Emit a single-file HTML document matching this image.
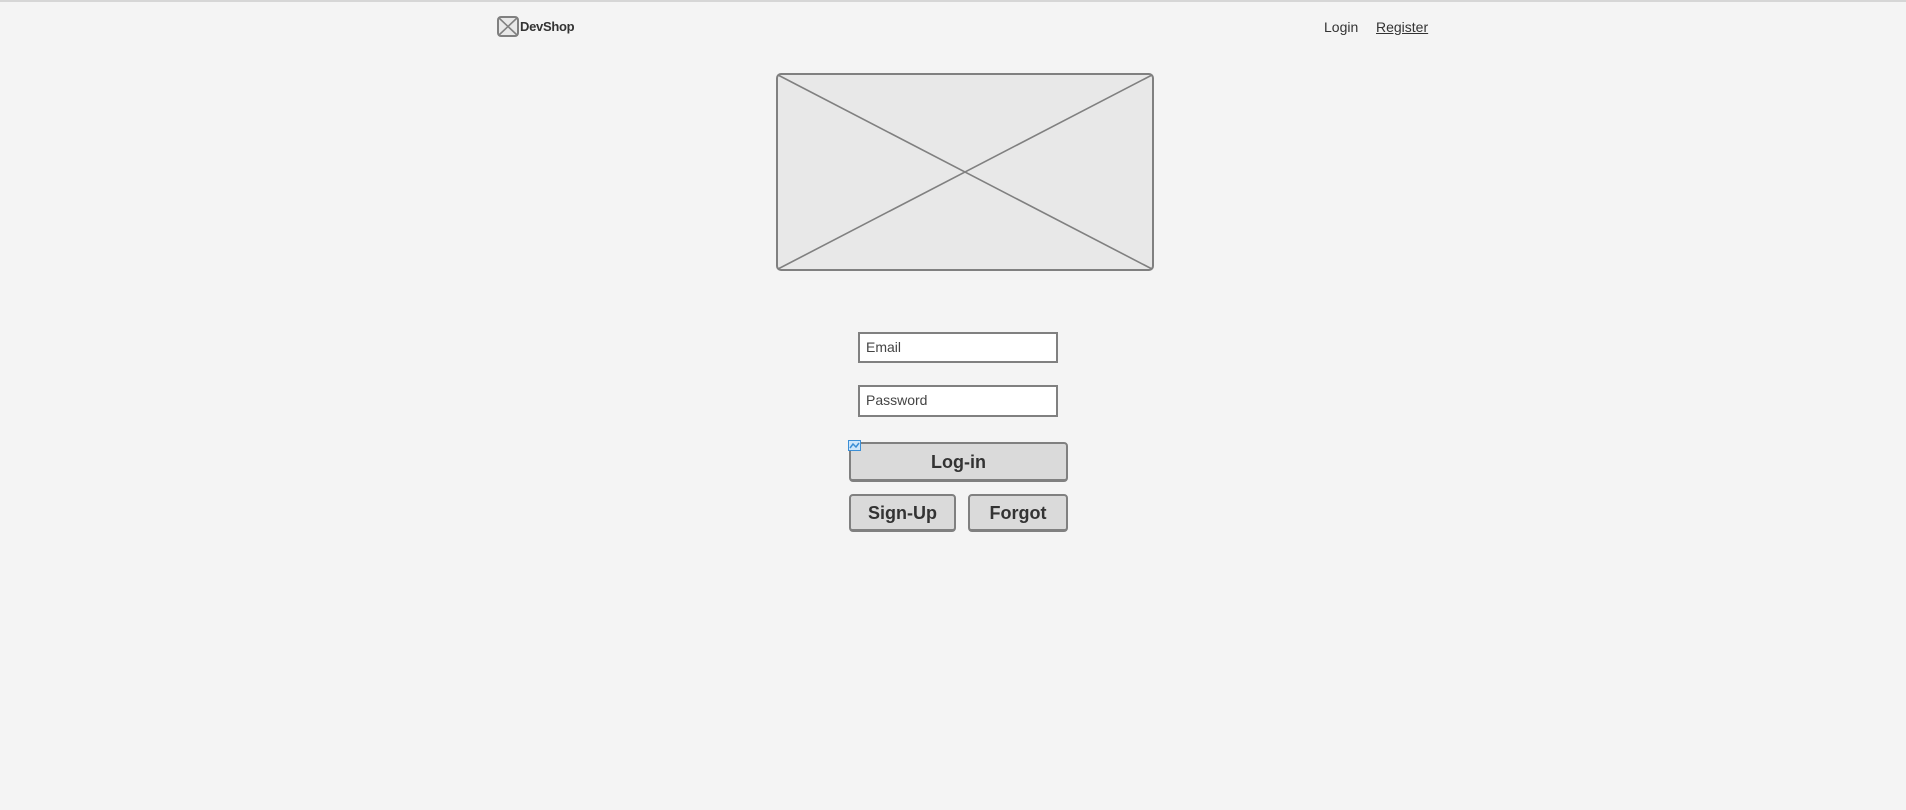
<!DOCTYPE html>
<html><head><meta charset="utf-8"><style>
html,body{margin:0;padding:0;}
body{width:1906px;height:810px;background:#f4f4f4;position:relative;overflow:hidden;font-family:"Liberation Sans",sans-serif;color:#333;}
.top{position:absolute;left:0;top:0;width:1906px;height:2px;background:#d6d6d6;}
.abs{position:absolute;}
.inp{position:absolute;background:#fff;border:2px solid #808080;box-sizing:border-box;font-size:14px;color:#444;padding-left:6px;line-height:26px;}
.btn{position:absolute;background:#dadada;border:2px solid #808080;border-bottom-width:3px;border-radius:4px;box-sizing:border-box;font-weight:bold;font-size:18px;color:#333;text-align:center;}
</style></head><body>
<div class="top"></div>
<svg class="abs" style="left:497px;top:16px" width="22" height="21" viewBox="0 0 22 21">
<rect x="1" y="1" width="20" height="19" rx="3" fill="#e8e8e8" stroke="#808080" stroke-width="2"/>
<path d="M2 2 L20 19 M20 2 L2 19" stroke="#808080" stroke-width="1.6"/>
</svg>
<div class="abs" style="left:520px;top:19px;font-size:13px;font-weight:bold;color:#333;letter-spacing:-0.3px">DevShop</div>
<div class="abs" style="left:1324px;top:19px;font-size:14px;color:#333">Login</div>
<div class="abs" style="left:1376px;top:19px;font-size:14px;color:#333;text-decoration:underline">Register</div>
<svg class="abs" style="left:776px;top:73px" width="378" height="198" viewBox="0 0 378 198">
<rect x="1" y="1" width="376" height="196" rx="4" fill="#e8e8e8" stroke="#808080" stroke-width="2"/>
<path d="M2 2 L376 196 M376 2 L2 196" stroke="#808080" stroke-width="1.6"/>
</svg>
<div class="inp" style="left:858px;top:332px;width:200px;height:31px;">Email</div>
<div class="inp" style="left:858px;top:385px;width:200px;height:32px;">Password</div>
<div class="btn" style="left:849px;top:442px;width:219px;height:40px;line-height:36px;">Log-in</div>
<svg class="abs" style="left:848px;top:440px" width="13" height="11"><rect x="0.5" y="0.5" width="12" height="10" fill="#cfe6fa" stroke="#3c8fd6"/><path d="M2 8 L5 4 L8 7 L11 3" stroke="#3c8fd6" fill="none" stroke-width="1.5"/></svg>
<div class="btn" style="left:849px;top:494px;width:107px;height:38px;line-height:34px;">Sign-Up</div>
<div class="btn" style="left:968px;top:494px;width:100px;height:38px;line-height:34px;">Forgot</div>
</body></html>
